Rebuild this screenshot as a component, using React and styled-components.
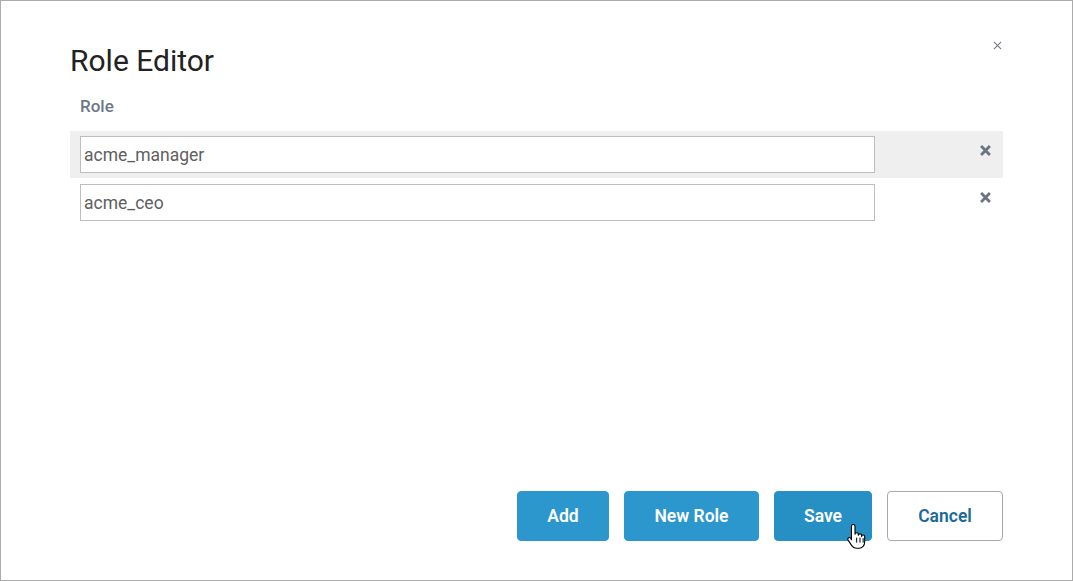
import React from "react";
import styled, { createGlobalStyle } from "styled-components";

const Global = createGlobalStyle`
  html, body { margin: 0; padding: 0; background: #fff; }
  body { font-family: Roboto, "Noto Sans", "Liberation Sans", sans-serif; }
  * { box-sizing: border-box; }
`;

const Dialog = styled.div`
  position: relative;
  width: 1073px;
  height: 581px;
  border: 1px solid #ababab;
  background: #fff;
  display: flex;
  flex-direction: column;
  padding: 42px 69px 39px 69px;
`;

const CloseButton = styled.button`
  position: absolute;
  top: 36px;
  right: 67px;
  width: 16px;
  height: 16px;
  padding: 0;
  border: none;
  background: transparent;
  display: flex;
  align-items: center;
  justify-content: center;
  cursor: pointer;
`;

const Title = styled.h1`
  margin: 0;
  font-size: 30px;
  line-height: 36px;
  font-weight: 400;
  color: #222;
`;

const Label = styled.div`
  margin: 17px 0 15px 10px;
  font-size: 17px;
  line-height: 20px;
  font-weight: 500;
  color: #6d7986;
`;

const List = styled.div`
  display: flex;
  flex-direction: column;
`;

const Row = styled.div`
  display: flex;
  align-items: center;
  justify-content: space-between;
  padding: ${(p) => (p.$active ? "5px" : "6px")} 11px 5px 10px;
  background: ${(p) => (p.$active ? "#efefef" : "transparent")};
`;

const Input = styled.input`
  width: 795px;
  height: 37px;
  border: 1px solid #bdbdbd;
  border-radius: 0;
  padding: 0 3px;
  font-family: Roboto, "Liberation Sans", sans-serif;
  font-size: 17.5px;
  color: #606060;
  background: #fff;
  outline: none;
`;

const RemoveButton = styled.button`
  width: 14px;
  height: 14px;
  padding: 0;
  margin-top: ${(p) => (p.$first ? "-8px" : "-10px")};
  border: none;
  background: transparent;
  display: flex;
  align-items: center;
  justify-content: center;
  cursor: pointer;
`;

const Footer = styled.div`
  margin-top: auto;
  display: flex;
  justify-content: flex-end;
  gap: 15px;
`;

const Button = styled.button`
  height: 50px;
  width: ${(p) => p.$w}px;
  border-radius: 4px;
  font-family: Roboto, "Liberation Sans", sans-serif;
  font-size: 17.5px;
  font-weight: 600;
  cursor: pointer;
  border: 1px solid ${(p) => (p.$secondary ? "#a9a9a9" : p.$hover ? "#268fc4" : "#2b97cd")};
  background: ${(p) => (p.$secondary ? "#fff" : p.$hover ? "#268fc4" : "#2b97cd")};
  color: ${(p) => (p.$secondary ? "#1d6a98" : "#fff")};
`;

const Cursor = styled.svg`
  position: absolute;
  left: 845px;
  top: 522px;
  pointer-events: none;
`;

const XIcon = ({ size, stroke, color }) => (
  <svg width={size} height={size} viewBox="0 0 10 10">
    <path d="M1 1 L9 9 M9 1 L1 9" stroke={color} strokeWidth={stroke} strokeLinecap="butt" fill="none" />
  </svg>
);

const roles = ["acme_manager", "acme_ceo"];

export default function App() {
  return (
    <>
      <Global />
      <Dialog>
        <CloseButton aria-label="Close">
          <XIcon size={9} stroke={1.2} color="#6f7883" />
        </CloseButton>
        <Title>Role Editor</Title>
        <Label>Role</Label>
        <List>
          {roles.map((r, i) => (
            <Row key={r} $active={i === 0}>
              <Input defaultValue={r} />
              <RemoveButton $first={i === 0} aria-label="Remove">
                <XIcon size={11} stroke={2.6} color="#6b7480" />
              </RemoveButton>
            </Row>
          ))}
        </List>
        <Footer>
          <Button $w={92}>Add</Button>
          <Button $w={135}>New Role</Button>
          <Button $w={98} $hover>Save</Button>
          <Button $w={116} $secondary>Cancel</Button>
        </Footer>
        <Cursor width="20" height="27" viewBox="0 0 18 24">
          <path
            d="M6.5 1.2c.9 0 1.6.7 1.6 1.6V10c0-.8.7-1.4 1.5-1.4s1.5.6 1.5 1.4v.9c0-.8.7-1.3 1.5-1.3s1.5.5 1.5 1.3v1c0-.7.6-1.2 1.3-1.2s1.4.5 1.4 1.2V17c0 3.1-2.1 5.6-5 5.6H9.3c-2 0-3.2-1-4.3-2.6l-3.1-4.7c-.5-.8-.3-1.7.4-2.1s1.6-.2 2.1.5L4.9 15V2.8c0-.9.7-1.6 1.6-1.6z"
            fill="#fff"
            stroke="#000"
            strokeWidth="1"
            strokeLinejoin="round"
          />
          <path d="M9.6 13v4.5M12.6 13v4.5M15.4 13.5v4" stroke="#000" strokeWidth="0.9" />
        </Cursor>
      </Dialog>
    </>
  );
}
